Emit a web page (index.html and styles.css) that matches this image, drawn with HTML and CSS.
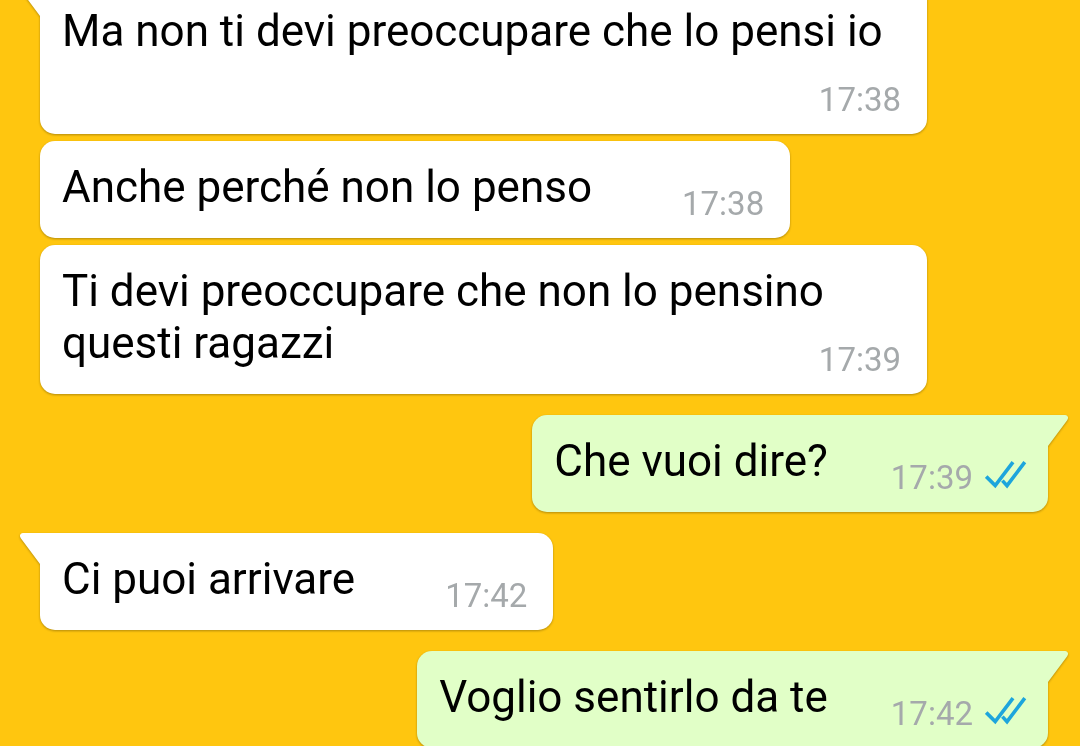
FILE: index.html
```html
<!DOCTYPE html>
<html lang="it">
<head>
    <meta charset="UTF-8">
    <meta name="viewport" content="width=device-width, initial-scale=1.0">
    <title>Chat</title>
    <link rel="stylesheet" href="styles.css">
</head>
<body>

    <svg class="sprite" aria-hidden="true">
        <symbol id="tail" viewBox="0 0 22 32">
            <path d="M22 0H3C0 0 -1 3 1 5.5L20 31H22Z" fill="currentColor"/>
        </symbol>
        <symbol id="ticks" viewBox="0 0 42 28">
            <g fill="none" stroke="currentColor" stroke-width="3.6">
                <path d="M1.2 15.6L10.2 24.6L28 1.2"/>
                <path d="M17.4 19.6L22 24.6L39.8 1.2"/>
            </g>
        </symbol>
    </svg>

    <main class="thread">
        <div class="message in first long">
            <svg class="tail"><use href="#tail"/></svg>
            <p class="text">Ma non ti devi preoccupare che lo pensi io</p>
            <div class="meta"><time>17:38</time></div>
        </div>

        <div class="message in">
            <p class="text">Anche perché non lo penso</p>
            <div class="meta"><time>17:38</time></div>
        </div>

        <div class="message in long">
            <p class="text">Ti devi preoccupare che non lo pensino questi ragazzi</p>
            <div class="meta"><time>17:39</time></div>
        </div>

        <div class="message out first">
            <svg class="tail"><use href="#tail"/></svg>
            <p class="text">Che vuoi dire?</p>
            <div class="meta"><time>17:39</time><svg class="ticks"><use href="#ticks"/></svg></div>
        </div>

        <div class="message in first">
            <svg class="tail"><use href="#tail"/></svg>
            <p class="text">Ci puoi arrivare</p>
            <div class="meta"><time>17:42</time></div>
        </div>

        <div class="message out first">
            <svg class="tail"><use href="#tail"/></svg>
            <p class="text">Voglio sentirlo da te</p>
            <div class="meta"><time>17:42</time><svg class="ticks"><use href="#ticks"/></svg></div>
        </div>
    </main>

</body>
</html>
```
FILE: styles.css
```css
body {
    margin: 0;
    height: 100vh;
    overflow: hidden;
    background-color: #ffc60f;
    font-family: Roboto, sans-serif;
    color: #000;
}

.sprite {
    display: none;
}

/* The thread is scrolled, the first bubble starts above the window */
.thread {
    display: flex;
    flex-direction: column;
    gap: 7px;
    margin-top: -15px;
    padding: 0 32px 0 40px;
}

.message {
    position: relative;
    display: flex;
    align-items: flex-end;
    box-sizing: border-box;
    padding: 20px 26px 15px 22px;
    border-radius: 15px;
    filter: drop-shadow(0 1px 1px rgba(0, 0, 0, 0.3));
}

.message.in {
    align-self: flex-start;
    gap: 90px;
    background-color: #fff;
    color: #fff;
}

.message.out {
    align-self: flex-end;
    gap: 63px;
    padding-right: 21px;
    background-color: #e1ffc7;
    color: #e1ffc7;
}

.message.in.first {
    border-top-left-radius: 0;
}

.message.out.first {
    border-top-right-radius: 0;
}

.message.first + .message.first,
.message.in + .message.out {
    margin-top: 14px;
}

/* Long messages fill the column and the time sits in the last line */
.message.long {
    flex-direction: column;
    gap: 0;
    width: 88%;
}

.long .text {
    align-self: stretch;
    min-height: 104px;
}

.long .meta {
    margin-top: -39px;
}

.text {
    margin: 0 0 10px;
    font-size: 44px;
    line-height: 52px;
    color: #000;
}

.meta {
    display: flex;
    align-items: baseline;
    gap: 12px;
    font-size: 33px;
    line-height: 39px;
    color: #a5a9ab;
}

.tail {
    position: absolute;
    top: 0;
    left: -20px;
    width: 22px;
    height: 32px;
}

.out .tail {
    left: auto;
    right: -20px;
    transform: scaleX(-1);
}

.ticks {
    width: 42px;
    height: 28px;
    color: #1da5dc;
}
```
